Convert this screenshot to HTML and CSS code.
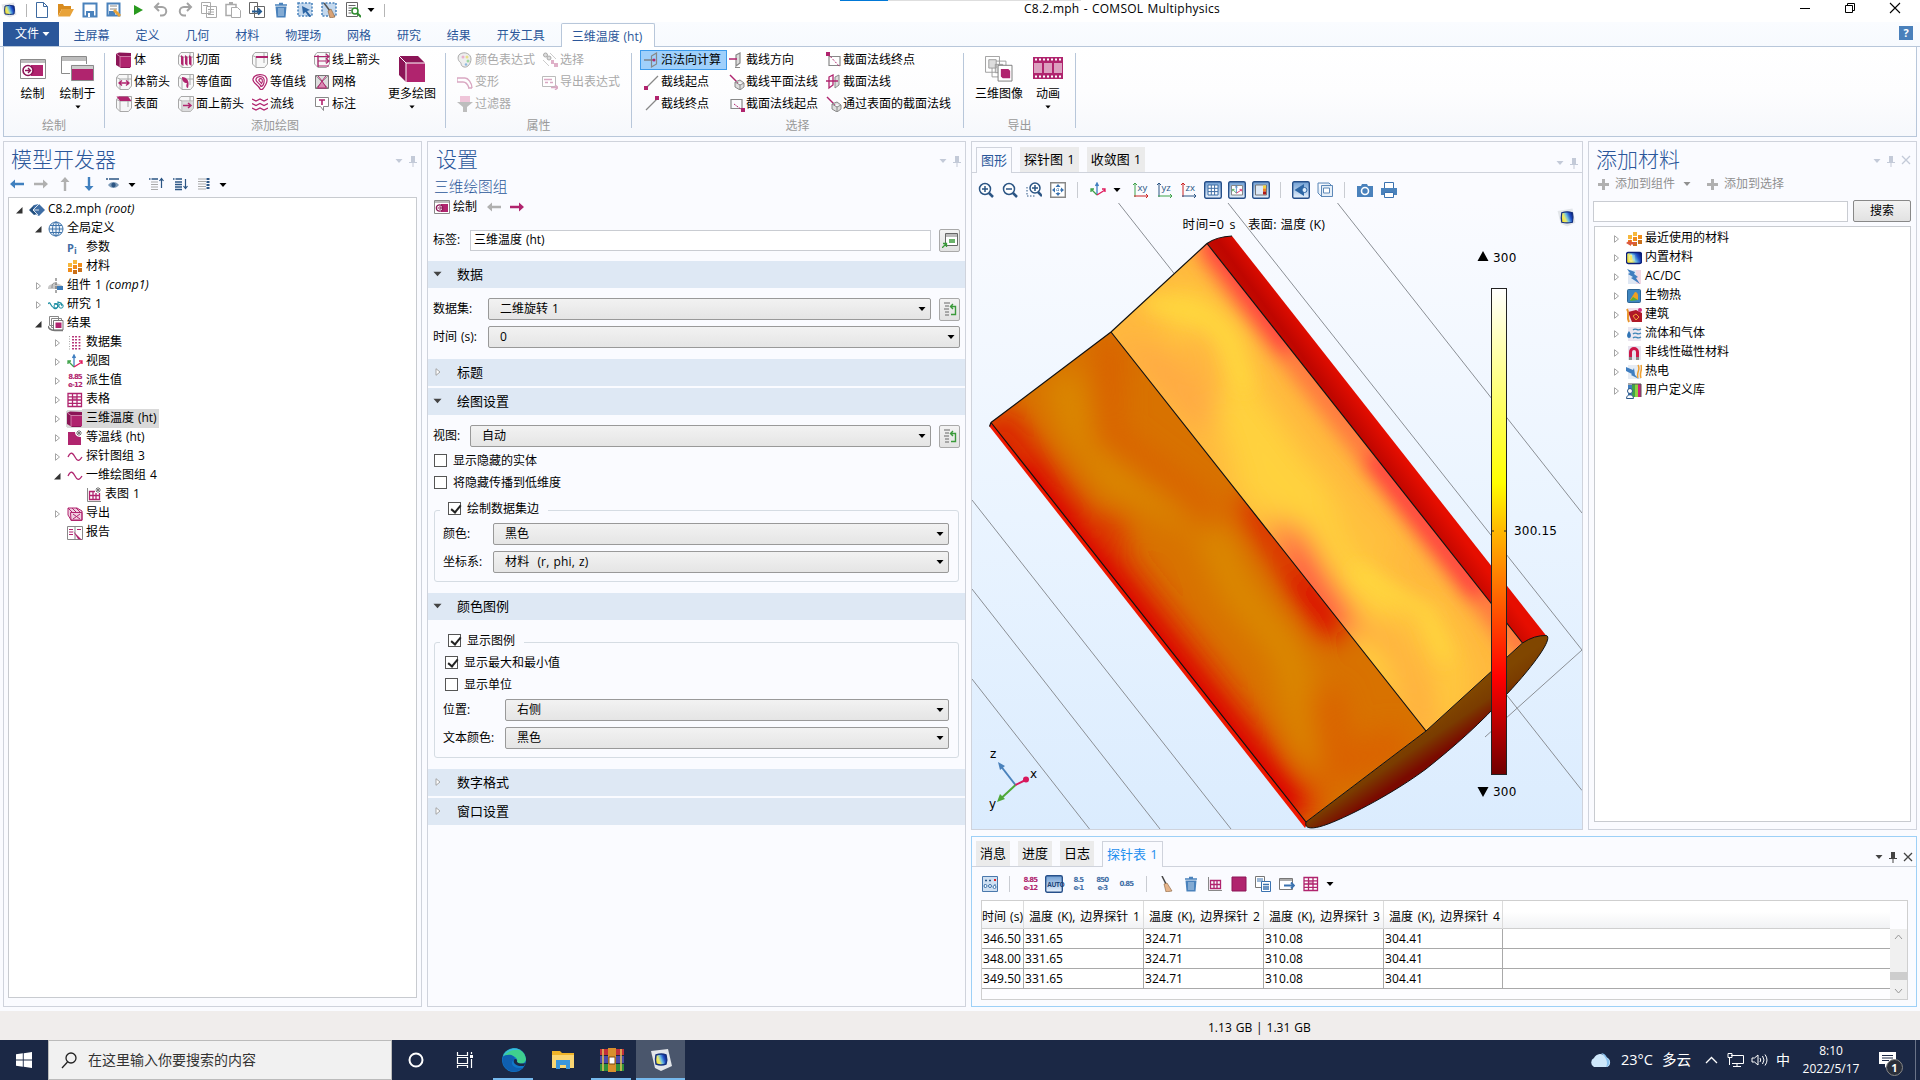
FILE: index.html
```html
<!DOCTYPE html>
<html lang="zh-CN">
<head>
<meta charset="utf-8">
<title>C8.2.mph - COMSOL Multiphysics</title>
<link rel="stylesheet" href="styles.css">
</head>
<body>
<svg class="defs" width="0" height="0">
<defs>
<linearGradient id="gBlue" x1="0" y1="0" x2="0" y2="1"><stop offset="0" stop-color="#6f9ed3"/><stop offset="1" stop-color="#eaf3fd"/></linearGradient>
<linearGradient id="gJet" x1="0" y1=".7" x2="1" y2=".3"><stop offset="0" stop-color="#f8e02c"/><stop offset=".3" stop-color="#e8e870"/><stop offset=".5" stop-color="#6fc0e0"/><stop offset=".75" stop-color="#2050c8"/><stop offset="1" stop-color="#0a1f7a"/></linearGradient>
</defs>
<symbol id="logo" viewBox="0 0 16 16"><path d="M.5 2.500L13 .5l2.500 12-7 3L3 13z" fill="#e3e6ea"/><path d="M4 4q4.500-1.500 9 0 1 4 0 8-4.500 1-9 0-.8-4 0-8z" fill="url(#gJet)" stroke="#14307e"/></symbol>
<symbol id="new" viewBox="0 0 16 16"><path d="M2.500 .5h7l4 4v11h-11zM9.500.5v4h4" fill="#fff" stroke="#3d6aa0"/></symbol>
<symbol id="open" viewBox="0 0 16 16"><path d="M0 14V2h5l1 2h7v3H4z" fill="#d98c1f"/><path d="M0 14.500L4 7h12l-4 7.500z" fill="#e8a33a"/></symbol>
<symbol id="save" viewBox="0 0 16 16"><path d="M1.500 1.500h13v13h-13z" fill="#fff" stroke="#4a82bc" stroke-width="2"/><path d="M4 9h8v6H4z" fill="#4a82bc"/><path d="M6 11h2v4H6z" fill="#fff"/></symbol>
<symbol id="saveas" viewBox="0 0 16 16"><path d="M1.500 1.500h12v12h-12z" fill="#fff" stroke="#4a82bc" stroke-width="2"/><path d="M4 4h7M4 7h7" stroke="#888"/><path d="M3 9h6v5H3z" fill="#4a82bc"/><path d="M8 8l6 6" stroke="#e8a33a" stroke-width="3"/></symbol>
<symbol id="play" viewBox="0 0 16 16"><path d="M4 3l9 5-9 5z" fill="#2a9a1f"/></symbol>
<symbol id="undo" viewBox="0 0 16 16"><path d="M2 5h7a4 4 0 0 1 0 8.500H7M6 1L2 5l4 4" fill="none" stroke="#a3a3a3" stroke-width="2"/></symbol>
<symbol id="redo" viewBox="0 0 16 16"><path d="M14 5H7a4 4 0 0 0 0 8.500h2M10 1l4 4-4 4" fill="none" stroke="#a3a3a3" stroke-width="2"/></symbol>
<symbol id="copy" viewBox="0 0 16 16"><path d="M.5.5h9v11h-9zM5.500 4.500h10v11h-10z" fill="#fff" stroke="#aaa"/><path d="M7 7.500h6M7 10h6M7 12.500h6M2 3.500h5" stroke="#aaa"/></symbol>
<symbol id="paste" viewBox="0 0 16 16"><path d="M1 2.500h10v11H1z" fill="#fff" stroke="#aaa" stroke-width="1.500"/><path d="M4 0h4v3H4z" fill="#aaa"/><path d="M6.500 5.500h6l3 3v7h-9z" fill="#fff" stroke="#aaa"/></symbol>
<symbol id="dup" viewBox="0 0 16 16"><path d="M.5.500h8v11h-8zM5.500 4.500h10v11h-10z" fill="#fff" stroke="#666"/><path d="M3 9.500h9M9 6.500l3 3-3 3" stroke="#245a90" stroke-width="2" fill="none"/></symbol>
<symbol id="trash" viewBox="0 0 16 16"><path d="M2.500 4.500h11l-1 11h-9z" fill="#4a82bc"/><path d="M6 6v8M8 6v8M10 6v8" stroke="#bcd3ea"/><path d="M2 3h12M6 1.500h4" stroke="#4a82bc" stroke-width="1.500"/></symbol>
<symbol id="sel" viewBox="0 0 16 16"><rect x="1" y="1" width="14" height="13" fill="#c3d8ee" stroke="#4a82bc" stroke-width="1.500" stroke-dasharray="2 1.500"/><path d="M5 4l8 4-3 1 4 5-2 1-3.500-5L6 12z" fill="#2d66a5"/></symbol>
<symbol id="selb" viewBox="0 0 16 16"><rect x="1" y="1" width="14" height="13" fill="#c3d8ee" stroke="#4a82bc" stroke-width="1.500" stroke-dasharray="2 1.500"/><path d="M3 1l6 8" stroke="#555" stroke-width="1.500"/><path d="M7 9l3-2 4 8-5 1z" fill="#d9a377" stroke="#84603c" stroke-width=".6"/></symbol>
<symbol id="find" viewBox="0 0 16 16"><path d="M1.500.500h11v14h-11z" fill="#fff" stroke="#666"/><path d="M3.500 3.500h7M3.500 6h4M3.500 8.500h3M3.500 11h3" stroke="#666"/><circle cx="10" cy="9" r="3" fill="#fff" stroke="#2e8b2e" stroke-width="1.500"/><path d="M12 11l4 4" stroke="#2e8b2e" stroke-width="2"/></symbol>
<symbol id="dd" viewBox="0 0 8 8"><path d="M.5 2h7L4 6z" fill="currentColor"/></symbol>
<symbol id="pin" viewBox="0 0 8 12"><path d="M2 1h4v6H2zM0 7h8v1H0zM3.500 8h1v4h-1z" fill="currentColor"/></symbol>
<symbol id="x" viewBox="0 0 10 10"><path d="M1 1l8 8M9 1L1 9" stroke="currentColor" stroke-width="1.300"/></symbol>
<symbol id="tc" viewBox="0 0 8 8"><path d="M2.500 .7v6.600L6.500 4z" fill="#fff" stroke="#a5a5a5"/></symbol>
<symbol id="to" viewBox="0 0 8 8"><path d="M7.500 1v6.500H1z" fill="#333"/></symbol>
<symbol id="so" viewBox="0 0 10 8"><path d="M.5 1.500h9L5 6.500z" fill="#444"/></symbol>
<!-- ribbon -->
<symbol id="plot" viewBox="0 0 26 20"><path d="M.5.500h25v19H.5z" fill="#fff" stroke="#8a8a8a"/><path d="M1 1h24v3H1z" fill="#bdbdbd"/><path d="M11 6h12v11H11z" fill="#b0246e"/><circle cx="8" cy="11.500" r="5" fill="#fff" stroke="#8c1557" stroke-width="1.600"/><path d="M5 11.500h5M8 9l2.500 2.500L8 14" fill="none" stroke="#8c1557" stroke-width="1.400"/></symbol>
<symbol id="plots" viewBox="0 0 16 14"><path d="M.5.500h15v13H.5z" fill="#fff" stroke="#8a8a8a"/><path d="M1 1h14v2H1z" fill="#bdbdbd"/><path d="M7 4h7v8H7z" fill="#b0246e"/><circle cx="5.500" cy="8" r="3.200" fill="#fff" stroke="#8c1557" stroke-width="1.200"/><path d="M3.500 8h4M5.500 6l2 2-2 2" fill="none" stroke="#8c1557"/></symbol>
<symbol id="plotin" viewBox="0 0 34 26"><path d="M.5.500h25v17H.5z" fill="#fff" stroke="#8a8a8a"/><path d="M1 1h24v4H1z" fill="#bdbdbd"/><path d="M9 8h25v18H9z" fill="#fafbfe"/><path d="M10.500 9.500h22v15h-22z" fill="#b0246e" stroke="#8a8a8a"/><path d="M11 10h21v3H11z" fill="#ccc"/></symbol>
<symbol id="cube" viewBox="0 0 16 16"><path d="M0 2l3-1.500 12 .5v13l-1 2H5L0 13z" fill="#8c1557"/><path d="M4 4.500h11V15H4z" fill="#b0246e"/><path d="M.5 2L4 4.500h11M4 4.500V15" stroke="#e3a3c4" fill="none" stroke-width=".7"/></symbol>
<symbol id="wc" viewBox="0 0 16 16"><path d="M.5 3.500L3 .5h12.500v11.500l-3 3.500H4L.5 12zM.5 3.500L4 5h11.500M4 5v10.500M12 1v10" fill="#f4f4f4" stroke="#a8a8a8" fill-opacity=".6"/></symbol>
<symbol id="varr" viewBox="0 0 16 16"><use href="#wc"/><path d="M3 9h10M10 6.500L13 9l-3 2.500M6 6.500L3 9l3 2.500" stroke="#b0246e" fill="none" stroke-width="1.300"/></symbol>
<symbol id="surf" viewBox="0 0 16 16"><use href="#wc"/><path d="M.5 .5h11.500L15.500 5H4z" fill="#b0246e"/></symbol>
<symbol id="slice" viewBox="0 0 16 16"><use href="#wc"/><path d="M3 3l2.500 2v9L3 12zM7 3l2.500 2v9L7 12zM11 3l2.500 2v9L11 12z" fill="#b0246e"/></symbol>
<symbol id="iso" viewBox="0 0 16 16"><use href="#wc"/><path d="M4 3c5 0 8 4 6 11-2 0-2-3-1-5-3 0-5-2-5-6z" fill="#b0246e"/></symbol>
<symbol id="sarr" viewBox="0 0 16 16"><use href="#wc"/><path d="M4 5h11.500v7l-3 3.500H4z" fill="#d2d2d2" fill-opacity=".7"/><path d="M5 9.500h8M10 7l3 2.500-3 2.500" stroke="#b0246e" fill="none" stroke-width="1.500"/></symbol>
<symbol id="line" viewBox="0 0 16 16"><use href="#wc"/><path d="M4 5h12" stroke="#b0246e" stroke-width="2"/></symbol>
<symbol id="cont" viewBox="0 0 16 16"><g fill="none" stroke="#b0246e" stroke-width="1.200"><path d="M8 15C7 11 0 9 1 5s6-5 10-4 5 5 3 9-4 7-6 5z"/><path d="M9 12.500C8 9 3 8 4 5s6-3 7.500-1 .5 8-2.500 8.500z"/><path d="M9.500 9.500C8.500 7.500 6 7 7 5.500s3-1 3.200 0 0 3.500-.7 4z"/></g></symbol>
<symbol id="stream" viewBox="0 0 16 16"><path d="M0 3l4 2 4-2 4 2 4-2M0 7.500l4 2 4-2 4 2 4-2M0 12l4 2 4-2 4 2 4-2" stroke="#b0246e" stroke-width="1.300" fill="none"/></symbol>
<symbol id="larr" viewBox="0 0 16 16"><use href="#wc"/><path d="M0 4.500h15M12 2l3 2.500-3 2.500M4 9h11M12 6.500L15 9l-3 2.500M4 14h11M4 3v12" stroke="#b0246e" fill="none" stroke-width="1.200"/></symbol>
<symbol id="mesh" viewBox="0 0 16 16"><path d="M1.500 1.500h13v13h-13z" fill="#ddd" stroke="#777"/><path d="M2 2l12 12M14 2L2 14" stroke="#999"/><path d="M8 7l4.500 7h-9z" fill="#d98ab2" stroke="#b0246e"/><path d="M4 2l4 5 4-5" fill="none" stroke="#b0246e"/></symbol>
<symbol id="note" viewBox="0 0 16 16"><path d="M1.500 1.500h13v9h-5v4L6.500 10.500h-5z" fill="#fff" stroke="#888"/><path d="M5 4h6M8 4v5" stroke="#b0246e" stroke-width="1.600"/></symbol>
<symbol id="bigcube" viewBox="0 0 26 26"><path d="M0 0h19l7 7v19H7L0 19z" fill="#8c1557"/><path d="M7 7h19v19H7z" fill="#b0246e"/><path d="M0 0l7 7h19M7 7v19" fill="none" stroke="#fff"/></symbol>
<symbol id="pal" viewBox="0 0 16 16"><path d="M3 2c5-3 11 0 11 5 0 4-3 9-7 8s-2-4-4-5-3-6 0-8z" fill="#eee" stroke="#aaa"/><circle cx="6" cy="5" r="1.500" fill="#e8b0ce"/><circle cx="10" cy="5" r="1.500" fill="#e8e08a"/><circle cx="11" cy="9" r="1.500" fill="#9fd6a0"/><circle cx="9" cy="12.500" r="1.300" fill="#8fb8e0"/></symbol>
<symbol id="deform" viewBox="0 0 16 16"><path d="M0 4h8c3 0 7 5 7 10M0 8h6c3 0 5 3 6 6M0 4v4M11 14h4" stroke="#d9a8c2" stroke-width="1.400" fill="none"/></symbol>
<symbol id="filt" viewBox="0 0 16 16"><path d="M3 0h10v6H3z" fill="#efc5d9"/><path d="M0 6h16l-6 5v5H6v-5z" fill="#bdbdbd"/></symbol>
<symbol id="cho" viewBox="0 0 16 16"><g fill="#ddd" stroke="#aaa"><circle cx="3.500" cy="3" r="2"/><circle cx="7" cy="6" r="2"/></g><path d="M9 8h3v4H9zM12 11h4v4h-4z" fill="#dfb0c8"/><path d="M8 1l6 6M1 8l6 6" stroke="#ccc"/></symbol>
<symbol id="expx" viewBox="0 0 16 16"><path d="M.5 2.500h13v10H.5z" fill="#fff" stroke="#bbb"/><path d="M2 5.500h8M3 8.500h3M8 8.500h3M9 13.500h7M13 11l3 2.500-3 2.500" stroke="#d9a8c2" fill="none" stroke-width="1.400"/></symbol>
<symbol id="s1" viewBox="0 0 16 16"><path d="M7.500 4l5-3v11l-5 3z" fill="none" stroke="#888" stroke-width="1.200"/><path d="M0 8h9" stroke="#777" stroke-width="1.300"/><circle cx="10" cy="8" r="1.500" fill="#b0246e"/></symbol>
<symbol id="s2" viewBox="0 0 16 16"><path d="M2 14L14 2" stroke="#888" stroke-width="1.200"/><path d="M0 12h4v4H0z" fill="#b0246e"/></symbol>
<symbol id="s3" viewBox="0 0 16 16"><path d="M2 14L14 2" stroke="#888" stroke-width="1.200"/><path d="M11 0h4v4h-4z" fill="#b0246e"/></symbol>
<symbol id="s4" viewBox="0 0 16 16"><path d="M7 3l4-2v10l-4 3zM6 15.500h5" fill="#ddd" stroke="#888" stroke-width="1.200"/><path d="M0 7h8" stroke="#b0246e" stroke-width="1.500"/></symbol>
<symbol id="s5" viewBox="0 0 16 16"><path d="M1 1l8 8" stroke="#b0246e" stroke-width="1.500"/><path d="M6 8l5-2 4 3v4l-4 3-5-3zM6 8l5 3 4-2M11 11v5" fill="#ddd" stroke="#888"/></symbol>
<symbol id="s6" viewBox="0 0 16 16"><path d="M2 3.500h11v9H2z" fill="none" stroke="#888" stroke-width="1.200"/><path d="M5 8l8 6" stroke="#b0246e" stroke-dasharray="2 1"/><path d="M12 12h4v4h-4z" fill="#b0246e"/></symbol>
<symbol id="s7" viewBox="0 0 16 16"><path d="M3 4.500h11v9H3z" fill="none" stroke="#888" stroke-width="1.200"/><path d="M2 2l12 13" stroke="#b0246e" stroke-dasharray="2 1.500"/><path d="M0 0h4v4H0z" fill="#b0246e"/></symbol>
<symbol id="s8" viewBox="0 0 16 16"><path d="M9 3l4-2v10l-4 3z" fill="#ddd" stroke="#888"/><path d="M3 3l4-2v10l-4 3zM0 7h12" fill="none" stroke="#b0246e" stroke-width="1.300"/></symbol>
<symbol id="img3" viewBox="0 0 30 28"><g fill="#fff" stroke="#9a9a9a"><path d="M.5.500h15v17H.5zM7.500 5.500h15v17h-15z"/><path d="M4 4h8v9H4zM11 9h8v9h-8z" fill="#ddd"/></g><path d="M14 10h15v17H14z" fill="#fff" stroke="#777"/><path d="M17 14h8l2 2v8h-8l-2-2z" fill="#b0246e"/></symbol>
<symbol id="film" viewBox="0 0 30 22"><path d="M0 0h30v22H0z" fill="#b0246e"/><path d="M1 6h8v10H1zM11 6h8v10h-8zM21 6h8v10h-8z" fill="#dca0c0"/><path d="M2 2.500h27M2 19.500h27" stroke="#fff" stroke-width="2" stroke-dasharray="2 2"/></symbol>
<!-- toolbars -->
<symbol id="al" viewBox="0 0 16 16"><path d="M1 8l5-4.500v3.300h9v2.400H6v3.300z" fill="currentColor"/></symbol>
<symbol id="ar" viewBox="0 0 16 16"><path d="M15 8l-5-4.500v3.300H1v2.400h9v3.300z" fill="currentColor"/></symbol>
<symbol id="au" viewBox="0 0 16 16"><path d="M8 1L3.500 6h3.300v9h2.400V6h3.300z" fill="currentColor"/></symbol>
<symbol id="ad" viewBox="0 0 16 16"><path d="M8 15l-4.500-5h3.300V1h2.400v9h3.300z" fill="currentColor"/></symbol>
<symbol id="eye" viewBox="0 0 16 16"><path d="M1 3h2M4 3h10" stroke="#2b5584" stroke-width="1.500"/><path d="M3 9c3-4 8-4 11 0-3 4-8 4-11 0z" fill="#7c9ab8"/><circle cx="8.500" cy="9" r="2.200" fill="#2b5584"/></symbol>
<symbol id="ls" viewBox="0 0 16 16"><path d="M1 3h1.500M3.500 3H10" stroke="#2b5584" stroke-width="1.500"/><path d="M3 6h7M3 8.500h7M3 11h7M3 13.500h7" stroke="#aaa"/><path d="M13.500 12V3M11.500 5l2-2.500 2 2.500" fill="none" stroke="#2b5584" stroke-width="1.200"/></symbol>
<symbol id="ls2" viewBox="0 0 16 16"><path d="M1 3h1.500M3.500 3H10M3 6h7M3 8.500h7M3 11h7M3 13.500h7" stroke="#2b5584" stroke-width="1.300"/><path d="M13.500 3v9M11.500 10l2 2.500 2-2.500" fill="none" stroke="#2b5584" stroke-width="1.200"/></symbol>
<symbol id="ls3" viewBox="0 0 16 16"><path d="M2 3h8M2 5.500h8M2 8h8M2 10.500h8M2 13h8" stroke="#aaa"/><path d="M12 2v12" stroke="#2b5584" stroke-width="3" stroke-dasharray="2 1"/></symbol>
<symbol id="root" viewBox="0 0 16 16"><path d="M0 8l5-5 3 2-4 3 4 4-3 1z" fill="#24507f"/><path d="M5 3l5-1 6 6-6 6-2-1-4-5z" fill="#3f6ea5"/><path d="M10 2L4 8l5 5M4 8h6" stroke="#fff" fill="none" stroke-width=".8"/></symbol>
<symbol id="globe" viewBox="0 0 16 16"><g fill="none" stroke="#3f74ab"><circle cx="8" cy="8" r="7" fill="#eef5fc"/><ellipse cx="8" cy="8" rx="3.500" ry="7"/><path d="M8 1v14M1 8h14M2 4.500h12M2 11.500h12"/></g></symbol>
<symbol id="mat" viewBox="0 0 16 16"><path d="M1 4h4v4H1zM6 1h4v4H6z" fill="#f6b73c"/><path d="M1 9h4v4H1zM6 6h4v4H6zM11 4h4v4h-4z" fill="#f08c1a"/><path d="M6 11h4v4H6zM11 9h4v4h-4z" fill="#c9701a"/></symbol>
<symbol id="comp" viewBox="0 0 16 16"><path d="M0 10c0-6 15-6 15 0v1H0z" fill="#c8c8c8"/><path d="M4 10c0-4 1-5 3-5" fill="none" stroke="#888"/><path d="M9 8h6v4H9z" fill="#3a7ab8"/><path d="M8 0v16" stroke="#555" stroke-dasharray="3 1"/></symbol>
<symbol id="study" viewBox="0 0 16 16"><path d="M0 7c2-4 3 3 5 3M5 10a2.500 2.500 0 1 0 1-3M10 10V5l3 1 1 3" fill="none" stroke="#1d8fa3" stroke-width="1.200"/><circle cx="8" cy="9" r="2" fill="none" stroke="#1d8fa3"/><circle cx="13" cy="9" r="2.200" fill="none" stroke="#1d8fa3"/></symbol>
<symbol id="res" viewBox="0 0 16 16"><path d="M1.500.500h9v9h-9zM3.500 2.500h10v9h-10z" fill="#fff" stroke="#888"/><path d="M5.500 4.500h9.500v9.500h-9.500z" fill="#fff" stroke="#777"/><path d="M7.500 6.500h6v5.500h-6z" fill="#b0246e"/><path d="M0 10c1 5 6 4.500 15 4.500" fill="none" stroke="#777" stroke-width="1.400"/></symbol>
<symbol id="ds" viewBox="0 0 16 16"><path d="M2.500 1v14" stroke="#aaa" stroke-dasharray="1 1.500"/><path d="M6 1v14M9 1v14M12.500 1v14" stroke="#b0246e" stroke-width="1.800" stroke-dasharray="1.500 1.500"/></symbol>
<symbol id="axes" viewBox="0 0 16 16"><path d="M7 13V2M5.500 4L7 1l1.500 3" stroke="#3f7ec0" fill="none" stroke-width="1.300"/><path d="M7 13L1 7M1 10V7h3" stroke="#3fa34a" fill="none" stroke-width="1.300"/><path d="M7 13l8-5M12 7h3v3" stroke="#e0195c" fill="none" stroke-width="1.300"/></symbol>
<symbol id="tbl" viewBox="0 0 16 16"><path d="M1 1.500h13.500v13H1z" fill="#fff"/><path d="M5 5h5v3H5z" fill="#dca0c0"/><path d="M1 1.500h13.500v13H1zM1 4.800h13.500M1 8h13.500M1 11.300h13.500M5.500 1.500v13M10 1.500v13" fill="none" stroke="#b0246e" stroke-width="1.300"/></symbol>
<symbol id="isot" viewBox="0 0 16 16"><path d="M1 2h7c0 4 3 5 6 5v8H1z" fill="#b0246e"/><path d="M12 0v6M9 3h6M10 1l4 4M14 1l-4 4" stroke="#777"/></symbol>
<symbol id="wave" viewBox="0 0 16 16"><path d="M1 8c3-6 5-4 7 0s4 5 7 0" fill="none" stroke="#b0246e" stroke-width="1.300"/></symbol>
<symbol id="tg" viewBox="0 0 16 16"><path d="M1.500 1v13.500H15" fill="none" stroke="#888"/><path d="M3.500 4.500h10v8h-10zM3.500 8.500h10M7 4.500v8M10 4.500v8" fill="none" stroke="#b0246e" stroke-width="1.300"/></symbol>
<symbol id="tgs" viewBox="0 0 16 16"><use href="#tg"/><path d="M9 0h7v6H9z" fill="#fff"/><path d="M12 0v6M9.500 3h5.500M10 1l4 4M14 1l-4 4" stroke="#777"/></symbol>
<symbol id="exp" viewBox="0 0 16 16"><path d="M1 2h9l5 3v9H4L1 9z" fill="#f0cfe0" stroke="#b0246e"/><path d="M3.500 6.500H15v8H4zM6 8l7 5M13 8l-7 5M1 2l4 4M5 2l4 4M9 2l4 4" stroke="#b0246e" fill="none"/></symbol>
<symbol id="rep" viewBox="0 0 16 16"><path d="M.5 1.500h15v13H.5zM8 1.500v13" fill="#fff" stroke="#888"/><path d="M2 4.500h4M2 7h4M2 9.500h4M10 4.500h4" stroke="#b0246e"/><path d="M6 6l9 9-4-1z" fill="#b0246e"/></symbol>
<symbol id="goto" viewBox="0 0 16 16"><path d="M3.500 1.500h12v12h-12z" fill="#fff" stroke="#666"/><path d="M4 2h11v3H4z" fill="#bbb"/><path d="M7 8h6M7 10h6M0 16l4-4M1 11.500h3.500V15" stroke="#3a9a3a" stroke-width="1.300" fill="none"/></symbol>
<symbol id="lst" viewBox="0 0 16 16"><path d="M2 2h6M3 5h4M2 8h5M3 11h4M3 14h4" stroke="#666"/><path d="M9 13.500h4.500v-8H9M11 3L8.500 5.500 11 8" stroke="#3a9a3a" fill="none" stroke-width="1.400"/></symbol>
<!-- graphics toolbar -->
<symbol id="zi" viewBox="0 0 16 16"><circle cx="7" cy="7" r="5.500" fill="#fff" stroke="#2b5584" stroke-width="1.500"/><path d="M11 11l4 4" stroke="#2b5584" stroke-width="2.500"/><path d="M4 7h6M7 4v6" stroke="#2b5584" stroke-width="1.500"/></symbol>
<symbol id="zo" viewBox="0 0 16 16"><circle cx="7" cy="7" r="5.500" fill="#fff" stroke="#2b5584" stroke-width="1.500"/><path d="M11 11l4 4" stroke="#2b5584" stroke-width="2.500"/><path d="M4 7h6" stroke="#2b5584" stroke-width="1.500"/></symbol>
<symbol id="zb" viewBox="0 0 16 16"><path d="M1 5v9h9" fill="none" stroke="#2b5584" stroke-dasharray="1.500 1.500"/><circle cx="9" cy="6" r="5" fill="#fff" stroke="#2b5584" stroke-width="1.500"/><path d="M12 10l4 4" stroke="#2b5584" stroke-width="2.500"/><path d="M6 6h6M9 3v6" stroke="#2b5584" stroke-width="1.500"/></symbol>
<symbol id="ze" viewBox="0 0 16 16"><path d="M.7.700h14.600v14.600H.7z" fill="#fff" stroke="#888" stroke-width="1.400"/><path d="M8 2l2.500 3h-5zM8 14l2.500-3h-5zM2 8l3-2.500v5zM14 8l-3-2.500v5z" fill="#3a72b0"/><path d="M8 4v8M4 8h8" stroke="#3a72b0" stroke-dasharray="1 1"/></symbol>
<symbol id="on" viewBox="0 0 18 18"><rect x=".7" y=".7" width="16.600" height="16.600" rx="1.500" fill="url(#gBlue)" stroke="#27508a" stroke-width="1.400"/></symbol>
<symbol id="grid" viewBox="0 0 18 18"><use href="#on"/><path d="M4 4h10v10H4zM4 7.300h10M4 10.600h10M7.300 4v10M10.600 4v10" fill="#fff" stroke="#3f6ea5"/></symbol>
<symbol id="gax" viewBox="0 0 18 18"><use href="#on"/><path d="M3.500 4.500h11v9.500h-11z" fill="#fff" stroke="#888"/><use href="#axes" x="4" y="4" width="10" height="10"/></symbol>
<symbol id="gleg" viewBox="0 0 18 18"><use href="#on"/><path d="M3.500 4h11v10h-11z" fill="#dfeaf6" stroke="#777"/><path d="M11 4.500h3v3h-3z" fill="#f7d53a"/><path d="M11 7.500h3v3h-3z" fill="#f08020"/><path d="M11 10.500h3v3h-3z" fill="#b01818"/></symbol>
<symbol id="spk" viewBox="0 0 18 18"><use href="#on"/><path d="M2.500 9L12 3v12z" fill="#2d66a5"/><circle cx="12.500" cy="9" r="2.500" fill="#dcebfa" stroke="#2d66a5"/></symbol>
<symbol id="trn" viewBox="0 0 16 16"><path d="M4.500 3.500h11v11h-11zM1 1h11l3 3M1 1v10l4 4" fill="#e6eff8" stroke="#5d88b8"/><path d="M6.500 6h6v5h-6z" fill="#fff" stroke="#5d88b8"/></symbol>
<symbol id="cam" viewBox="0 0 16 16"><path d="M0 4h4l1-2h5l1 2h5v11H0z" fill="#4a82bc"/><circle cx="8" cy="9" r="3.500" fill="none" stroke="#fff" stroke-width="1.600"/></symbol>
<symbol id="prn" viewBox="0 0 16 16"><path d="M3.500.500h9v6h-9z" fill="#fff" stroke="#3a72b0"/><path d="M0 6h16v7H0z" fill="#4a82bc"/><path d="M3.500 10.500h9v5h-9z" fill="#fff" stroke="#3a72b0"/></symbol>
<!-- table toolbar -->
<symbol id="abc" viewBox="0 0 16 16"><path d="M.5.500h15v15H.5z" fill="#cfe0f2" stroke="#4a78ac"/><path d="M3 4.500h8" stroke="#2b5584" stroke-width="1.600" stroke-dasharray="2 2"/><path d="M12 3h2v2h-2z" fill="#e02020"/><path d="M3 8v4M8 8v4M13 8v4" stroke="#3f74ab"/><g fill="#fff" stroke="#3f74ab"><circle cx="3.500" cy="10" r="1.500"/><circle cx="8" cy="10" r="1.500"/><circle cx="12.500" cy="11" r="1.500"/></g></symbol>
<symbol id="broom" viewBox="0 0 16 16"><path d="M3 0l4 8" stroke="#444" stroke-width="1.500"/><path d="M5 8l3-1 5 8-6 1z" fill="#e6b48a" stroke="#84603c" stroke-width=".6"/></symbol>
<symbol id="sq" viewBox="0 0 16 16"><path d="M1 1h14v14H1z" fill="#b0246e" stroke="#8c1557"/></symbol>
<symbol id="cpy" viewBox="0 0 16 16"><path d="M.5.500h9v11h-9z" fill="#fff" stroke="#777"/><path d="M2 3h6M2 5h6" stroke="#3a72b0"/><path d="M6.500 5.500h9v10h-9z" fill="#fff" stroke="#3a72b0"/><path d="M8 8.500h6M8 11h6M8 13h6" stroke="#3a72b0" stroke-width="1.500"/></symbol>
<symbol id="ext" viewBox="0 0 16 16"><path d="M.5 2.500h13v11H.5z" fill="#fff" stroke="#777"/><path d="M1 3h12v2H1z" fill="#aaa"/><path d="M5 9.500h10M12 6.500l3 3-3 3" stroke="#3a72b0" fill="none" stroke-width="1.800"/></symbol>
<!-- material library -->
<symbol id="m1" viewBox="0 0 16 16"><use href="#mat" x="1"/><path d="M0 12l5-3.500V11h5v2.500H5V15z" fill="#dd5a3c"/></symbol>
<symbol id="m2" viewBox="0 0 16 16"><rect x=".5" y="2.500" width="15" height="11" rx="2" fill="url(#gJet)" stroke="#0a1f7a" stroke-width="1.400"/><path d="M4 5h2v6H4zM8 5v6" fill="#f8e02c" stroke="#fff" stroke-width=".5"/></symbol>
<symbol id="m3" viewBox="0 0 16 16"><path d="M2 1h13v14H2z" fill="#dfe7f3"/><path d="M10 1h5v14h-5z" fill="#f0d8e4"/><path d="M1 0l8 3-1 2 4 3-2 1 4 6-9-6 2-1-5-3 2-1z" fill="#3f7ec0"/></symbol>
<symbol id="m4" viewBox="0 0 16 16"><rect x="1.500" y="1.500" width="13" height="13" rx="1" fill="#3f86c0" stroke="#2c6494"/><path d="M4 12l5-8c4 0 3 6 3 8z" fill="#f0a020"/><path d="M4 13l3-4 5 3z" fill="#5ab030"/></symbol>
<symbol id="m5" viewBox="0 0 16 16"><path d="M2 1h13v14H2z" fill="#f3e0ea"/><path d="M2 5l8-2 6 3v9H6z" fill="#b01828"/><path d="M1 2c3 4-1 8 2 13" stroke="#e8952a" stroke-width="2" fill="none"/><path d="M7 9l3-2 3 3-3 3z" fill="none" stroke="#f6a03a"/><circle cx="14" cy="3" r="2" fill="#d0307a"/></symbol>
<symbol id="m6" viewBox="0 0 16 16"><path d="M2 1h13v14H2z" fill="#eae6f0"/><path d="M3 5c3 4 2 7 0 7s-3-3 0-7z" fill="#2f74b5"/><path d="M7 4c3-3 4 2 8-1M7 8c3-3 4 2 8-1M7 12c3-3 4 2 8-1" stroke="#3f86b8" stroke-width="1.300" fill="none"/></symbol>
<symbol id="m7" viewBox="0 0 16 16"><path d="M2 1h13v14H2z" fill="#e6e2ee"/><path d="M4.500 14V7a3.500 3.500 0 0 1 7 0v7" stroke="#cc1648" stroke-width="3" fill="none"/><path d="M3 12h3v3H3zM10 12h3v3h-3z" fill="#888"/></symbol>
<symbol id="m8" viewBox="0 0 16 16"><path d="M2 1h13v14H2z" fill="#e6ecf4"/><path d="M0 3l7 3 1-2 1 7 4 4-8-4 1-1-6-3z" fill="#3f7ec0"/><path d="M12 1c3 5-2 7 0 13M15 1c2 5-2 7 0 13" stroke="#f0a030" fill="none" stroke-width="1.500"/></symbol>
<symbol id="m9" viewBox="0 0 16 16"><path d="M2 2h4v12H2z" fill="#3f7ec0"/><path d="M6 1h3v13H6z" fill="#3fa34a"/><path d="M9 1h3v13H9z" fill="#8fd040"/><path d="M12 1h3v13h-3z" fill="#d0207a"/><path d="M2 1h13v13" fill="none" stroke="#555"/><circle cx="4" cy="8" r="2.500" fill="#fff" stroke="#2b5584"/><path d="M.5 15.500c0-5 7-5 7 0z" fill="#fff" stroke="#2b5584"/></symbol>
</svg>

<header class="titlebar">
  <svg class="i"><use href="#logo"/></svg><i class="vsep"></i>
  <div class="quick">
    <svg class="i"><use href="#new"/></svg><svg class="i"><use href="#open"/></svg><svg class="i"><use href="#save"/></svg><svg class="i"><use href="#saveas"/></svg><svg class="i"><use href="#play"/></svg><svg class="i"><use href="#undo"/></svg><svg class="i"><use href="#redo"/></svg><svg class="i"><use href="#copy"/></svg><svg class="i"><use href="#paste"/></svg><svg class="i"><use href="#dup"/></svg><svg class="i"><use href="#trash"/></svg><svg class="i"><use href="#sel"/></svg><svg class="i"><use href="#selb"/></svg><svg class="i"><use href="#find"/></svg>
  </div>
  <svg class="dd qd"><use href="#dd"/></svg><i class="vsep"></i>
  <div class="loading"><i></i></div>
  <div class="wtitle">C8.2.mph - COMSOL Multiphysics</div>
  <div class="winbtns">
    <svg width="12" height="12"><path d="M1 6.500h10" stroke="#000"/></svg>
    <svg width="12" height="12"><path d="M1.500 3.500h7v7h-7zM3.500 3.500v-2h7v7h-2" fill="none" stroke="#000"/></svg>
    <svg width="12" height="12"><path d="M1 1l10 10M11 1L1 11" stroke="#000" stroke-width="1.100"/></svg>
  </div>
</header>

<nav class="tabs">
  <a class="file">文件<svg class="dd"><use href="#dd"/></svg></a>
  <a>主屏幕</a><a>定义</a><a>几何</a><a>材料</a><a>物理场</a><a>网格</a><a>研究</a><a>结果</a><a>开发工具</a><a class="cur">三维温度 (ht)</a>
  <b class="help">?</b>
</nav>

<section class="ribbon">
  <div class="grp g1">
    <div class="bigs">
      <div class="big"><svg width="26" height="26" viewBox="0 -3 26 26"><use href="#plot" width="26" height="20"/></svg><span>绘制</span></div>
      <div class="big"><svg width="34" height="26"><use href="#plotin"/></svg><span>绘制于</span><svg class="dd"><use href="#dd"/></svg></div>
    </div>
    <h6>绘制</h6>
  </div>
  <div class="grp g2">
    <div class="row">
    <div class="cmds c2">
      <p><svg class="i"><use href="#cube"/></svg>体</p><p><svg class="i"><use href="#slice"/></svg>切面</p><p><svg class="i"><use href="#line"/></svg>线</p><p><svg class="i"><use href="#larr"/></svg>线上箭头</p>
      <p><svg class="i"><use href="#varr"/></svg>体箭头</p><p><svg class="i"><use href="#iso"/></svg>等值面</p><p><svg class="i"><use href="#cont"/></svg>等值线</p><p><svg class="i"><use href="#mesh"/></svg>网格</p>
      <p><svg class="i"><use href="#surf"/></svg>表面</p><p><svg class="i"><use href="#sarr"/></svg>面上箭头</p><p><svg class="i"><use href="#stream"/></svg>流线</p><p><svg class="i"><use href="#note"/></svg>标注</p>
    </div>
    <div class="big more"><svg width="26" height="26"><use href="#bigcube"/></svg><span>更多绘图</span><svg class="dd"><use href="#dd"/></svg></div>
    </div>
    <h6>添加绘图</h6>
  </div>
  <div class="grp g3 off">
    <div class="cmds c3">
      <p><svg class="i"><use href="#pal"/></svg>颜色表达式</p><p><svg class="i"><use href="#cho"/></svg>选择</p>
      <p><svg class="i"><use href="#deform"/></svg>变形</p><p><svg class="i"><use href="#expx"/></svg>导出表达式</p>
      <p><svg class="i"><use href="#filt"/></svg>过滤器</p>
    </div>
    <h6>属性</h6>
  </div>
  <div class="grp g4">
    <div class="cmds c4">
      <p class="hot"><svg class="i"><use href="#s1"/></svg>沿法向计算</p><p><svg class="i"><use href="#s4"/></svg>截线方向</p><p><svg class="i"><use href="#s7"/></svg>截面法线终点</p>
      <p><svg class="i"><use href="#s2"/></svg>截线起点</p><p><svg class="i"><use href="#s5"/></svg>截线平面法线</p><p><svg class="i"><use href="#s8"/></svg>截面法线</p>
      <p><svg class="i"><use href="#s3"/></svg>截线终点</p><p><svg class="i"><use href="#s6"/></svg>截面法线起点</p><p><svg class="i"><use href="#s5"/></svg>通过表面的截面法线</p>
    </div>
    <h6>选择</h6>
  </div>
  <div class="grp g5">
    <div class="bigs">
      <div class="big"><svg width="30" height="26"><use href="#img3"/></svg><span>三维图像</span></div>
      <div class="big"><svg width="30" height="26"><use href="#film" y="1" width="30" height="22"/></svg><span>动画</span><svg class="dd"><use href="#dd"/></svg></div>
    </div>
    <h6>导出</h6>
  </div>
</section>

<main class="work">
  <section class="panel builder">
    <div class="phead"><h2>模型开发器</h2><svg class="dd"><use href="#dd"/></svg><svg class="pin"><use href="#pin"/></svg></div>
    <div class="btools">
      <svg class="i blue"><use href="#al"/></svg><svg class="i gray"><use href="#ar"/></svg><svg class="i gray"><use href="#au"/></svg><svg class="i blue"><use href="#ad"/></svg><svg class="i"><use href="#eye"/></svg><svg class="dd"><use href="#dd"/></svg><svg class="i"><use href="#ls"/></svg><svg class="i"><use href="#ls2"/></svg><svg class="i"><use href="#ls3"/></svg><svg class="dd"><use href="#dd"/></svg>
    </div>
    <ul class="tree">
      <li><svg class="t"><use href="#to"/></svg><svg class="i"><use href="#root"/></svg><span>C8.2.mph <em>(root)</em></span></li>
      <li class="l1"><svg class="t"><use href="#to"/></svg><svg class="i"><use href="#globe"/></svg><span>全局定义</span></li>
      <li class="l2"><svg class="t"></svg><svg class="i" viewBox="0 0 16 16"><text class="pi" x="0" y="12">P<tspan dy="2" font-size="9">i</tspan></text></svg><span>参数</span></li>
      <li class="l2"><svg class="t"></svg><svg class="i"><use href="#mat"/></svg><span>材料</span></li>
      <li class="l1"><svg class="t"><use href="#tc"/></svg><svg class="i"><use href="#comp"/></svg><span>组件 1 <em>(comp1)</em></span></li>
      <li class="l1"><svg class="t"><use href="#tc"/></svg><svg class="i"><use href="#study"/></svg><span>研究 1</span></li>
      <li class="l1"><svg class="t"><use href="#to"/></svg><svg class="i"><use href="#res"/></svg><span>结果</span></li>
      <li class="l2"><svg class="t"><use href="#tc"/></svg><svg class="i"><use href="#ds"/></svg><span>数据集</span></li>
      <li class="l2"><svg class="t"><use href="#tc"/></svg><svg class="i"><use href="#axes"/></svg><span>视图</span></li>
      <li class="l2"><svg class="t"><use href="#tc"/></svg><div class="num mag">8.85<br>e-12</div><span>派生值</span></li>
      <li class="l2"><svg class="t"><use href="#tc"/></svg><svg class="i"><use href="#tbl"/></svg><span>表格</span></li>
      <li class="l2 picked"><svg class="t"><use href="#tc"/></svg><svg class="i"><use href="#cube"/></svg><span>三维温度 (ht)</span></li>
      <li class="l2"><svg class="t"><use href="#tc"/></svg><svg class="i"><use href="#isot"/></svg><span>等温线 (ht)</span></li>
      <li class="l2"><svg class="t"><use href="#tc"/></svg><svg class="i"><use href="#wave"/></svg><span>探针图组 3</span></li>
      <li class="l2"><svg class="t"><use href="#to"/></svg><svg class="i"><use href="#wave"/></svg><span>一维绘图组 4</span></li>
      <li class="l3"><svg class="t"></svg><svg class="i"><use href="#tgs"/></svg><span>表图 1</span></li>
      <li class="l2"><svg class="t"><use href="#tc"/></svg><svg class="i"><use href="#exp"/></svg><span>导出</span></li>
      <li class="l2"><svg class="t"></svg><svg class="i"><use href="#rep"/></svg><span>报告</span></li>
    </ul>
  </section>

  <section class="panel settings">
    <div class="phead"><h2>设置</h2><svg class="dd"><use href="#dd"/></svg><svg class="pin"><use href="#pin"/></svg></div>
    <h3>三维绘图组</h3>
    <div class="stools"><svg class="i"><use href="#plots"/></svg><span>绘制</span><svg class="i gray"><use href="#al"/></svg><svg class="i mag"><use href="#ar"/></svg></div>
    <div class="frm lab"><label>标签:</label><div class="inp">三维温度 (ht)</div><div class="btn"><svg class="i"><use href="#goto"/></svg></div></div>
    <h4><svg><use href="#so"/></svg>数据</h4>
    <div class="body b1">
      <div class="frm w55"><label>数据集:</label><div class="cmb">二维旋转 1<svg class="dd"><use href="#dd"/></svg></div><div class="btn"><svg class="i"><use href="#lst"/></svg></div></div>
      <div class="frm w55"><label>时间 (s):</label><div class="cmb">0<svg class="dd"><use href="#dd"/></svg></div></div>
    </div>
    <h4><svg><use href="#tc"/></svg>标题</h4>
    <h4 class="next"><svg><use href="#so"/></svg>绘图设置</h4>
    <div class="body b2">
      <div class="frm"><label>视图:</label><div class="cmb">自动<svg class="dd"><use href="#dd"/></svg></div><div class="btn"><svg class="i"><use href="#lst"/></svg></div></div>
      <div class="chk"><i></i>显示隐藏的实体</div>
      <div class="chk"><i></i>将隐藏传播到低维度</div>
      <div class="box">
        <div class="chk leg"><i class="on"></i>绘制数据集边</div>
        <div class="frm w50"><label>颜色:</label><div class="cmb">黑色<svg class="dd"><use href="#dd"/></svg></div></div>
        <div class="frm w50"><label>坐标系:</label><div class="cmb"><span class="pre">材料  (r, phi, z)</span><svg class="dd"><use href="#dd"/></svg></div></div>
      </div>
    </div>
    <h4><svg><use href="#so"/></svg>颜色图例</h4>
    <div class="body b3">
      <div class="box">
        <div class="chk leg"><i class="on"></i>显示图例</div>
        <div class="chk"><i class="on"></i>显示最大和最小值</div>
        <div class="chk"><i></i>显示单位</div>
        <div class="frm w62"><label>位置:</label><div class="cmb">右侧<svg class="dd"><use href="#dd"/></svg></div></div>
        <div class="frm w62"><label>文本颜色:</label><div class="cmb">黑色<svg class="dd"><use href="#dd"/></svg></div></div>
      </div>
    </div>
    <h4><svg><use href="#tc"/></svg>数字格式</h4>
    <h4 class="next"><svg><use href="#tc"/></svg>窗口设置</h4>
  </section>

  <div class="right">
    <div class="upper">
      <section class="panel graphics">
        <div class="ptabs"><a class="cur">图形</a><a>探针图 1</a><a>收敛图 1</a><span class="sp"></span><svg class="dd"><use href="#dd"/></svg><svg class="pin"><use href="#pin"/></svg></div>
        <div class="gtools">
          <svg class="i"><use href="#zi"/></svg><svg class="i"><use href="#zo"/></svg><svg class="i"><use href="#zb"/></svg><svg class="i"><use href="#ze"/></svg><i class="vs"></i>
          <svg class="i"><use href="#axes"/></svg><svg class="dd"><use href="#dd"/></svg>
          <svg class="i ml" viewBox="0 0 16 16"><path d="M2 15V1M0 3l2-2 2 2" stroke="#3fa34a" fill="none"/><path d="M1 14h14M13 12l2 2-2 2" stroke="#c22" fill="none"/><text class="pl" x="4.500" y="9">xy</text></svg>
          <svg class="i" viewBox="0 0 16 16"><path d="M2 15V1M0 3l2-2 2 2" stroke="#2b5584" fill="none"/><path d="M1 14h14M13 12l2 2-2 2" stroke="#3fa34a" fill="none"/><text class="pl" x="4.500" y="9">yz</text></svg>
          <svg class="i" viewBox="0 0 16 16"><path d="M2 15V1M0 3l2-2 2 2" stroke="#c22" fill="none"/><path d="M1 14h14M13 12l2 2-2 2" stroke="#2b5584" fill="none"/><text class="pl" x="4.500" y="9">zx</text></svg>
          <svg class="i18"><use href="#grid"/></svg><svg class="i18"><use href="#gax"/></svg><svg class="i18"><use href="#gleg"/></svg><i class="vs"></i>
          <svg class="i18"><use href="#spk"/></svg><svg class="i"><use href="#trn"/></svg><i class="vs"></i><svg class="i"><use href="#cam"/></svg><svg class="i"><use href="#prn"/></svg>
        </div>
        <svg class="scene" viewBox="972 203 610 626" width="610" height="626">
          <defs>
            <linearGradient id="bg" x1="0" y1="0" x2="0" y2="1"><stop offset="0" stop-color="#fafbff"/><stop offset=".5" stop-color="#eaf4ff"/><stop offset="1" stop-color="#dbecfe"/></linearGradient>
            <linearGradient id="hot" x1="0" y1="0" x2="0" y2="1"><stop offset="0" stop-color="#fff"/><stop offset=".4" stop-color="#ff0"/><stop offset=".5" stop-color="#ffb700"/><stop offset=".8" stop-color="#f00"/><stop offset="1" stop-color="#700000"/></linearGradient>
            <linearGradient id="band" gradientUnits="userSpaceOnUse" x1="1360" y1="460" x2="1390" y2="438"><stop offset="0" stop-color="#c40c00"/><stop offset=".4" stop-color="#bf0600"/><stop offset="1" stop-color="#e60e00"/></linearGradient>
            <linearGradient id="cap" gradientUnits="userSpaceOnUse" x1="1415" y1="730" x2="1434" y2="758"><stop offset="0" stop-color="#804600"/><stop offset=".45" stop-color="#7a3c00"/><stop offset="1" stop-color="#7a0a00"/></linearGradient>
            <clipPath id="cy"><path d="M1207 243.500L1111 332 1426 731l96.500-88z"/></clipPath>
            <clipPath id="co"><path d="M1111 332L991 422.500 1306 822l120-91z"/></clipPath>
            <filter id="b8" x="-50%" y="-50%" width="200%" height="200%"><feGaussianBlur stdDeviation="9"/></filter>
            <filter id="b14" x="-50%" y="-50%" width="200%" height="200%"><feGaussianBlur stdDeviation="14"/></filter>
          </defs>
          <rect x="972" y="203" width="610" height="626" fill="url(#bg)"/>
          <path d="M1118.500 203L1582 790.500M1228 203l354 447-97 87M1337.500 203L1582 513M972 500l259 329M972 589l188 240M972 679l117.500 150" fill="none" stroke="#8b8f95"/>
          <path d="M1207 243.500q10-7 25-7.500L1546.500 636l-24 7.500z" fill="url(#band)"/>
          <path d="M991 422.500l-1.500 4L1305 828l3-6z" fill="#f01800"/>
          <g clip-path="url(#cy)">
            <path d="M1100 230h430v510h-430z" fill="#ffb93e"/>
            <g filter="url(#b14)">
              <path d="M1150 300l40-15 45 40 25 70 60 80 30 70 50 50 30 90-20 30-60-60-50-110-60-60-25-70-20-60z" fill="#ffd23e"/>
              <path d="M1110 335l60 20 50 60-20 20z" fill="#ffa845"/>
              <path d="M1195 330l20 50-10 30" stroke="#ffae42" stroke-width="20" fill="none"/>
              <path d="M1280 430l60 60 60 60-20 5z" fill="#ffc63c"/>
              <path d="M1255 510l50 20 35 70-5 40z" fill="#ff7044"/>
              <path d="M1340 625l50 10 40 90" stroke="#ffac40" stroke-width="26" fill="none"/>
              <path d="M1140 380l60 60 50 80 30 10z" fill="#ffc83c"/>
              <path d="M1425 610l30 60-10 50" stroke="#ffcf3c" stroke-width="20" fill="none"/>
              <path d="M1295 555l50 75" stroke="#ff5044" stroke-width="34" fill="none"/>
            </g>
            <g filter="url(#b8)">
              <path d="M1207 243L1535 660" stroke="#ff7a40" stroke-width="32" fill="none"/>
              <path d="M1205 235l85 115M1370 455l110 140" stroke="#ff3c40" stroke-width="22" fill="none"/>
              <path d="M1355 570l35 22 35 18 22 50" stroke="#ffdc3c" stroke-width="10" fill="none"/>
              <path d="M1145 302l60 12 25 25 15 50" stroke="#ffda3c" stroke-width="12" fill="none"/>
            </g>
          </g>
          <g clip-path="url(#co)">
            <path d="M980 320h460v510H980z" fill="#d87200"/>
            <g filter="url(#b14)">
              <path d="M1062 375l15 50 40 55 90 40 30 70 50 60 25 100 40 30" stroke="#da8800" stroke-width="36" fill="none"/>
              <path d="M1111 335l-5 100 80 60 30 30" stroke="#d96000" stroke-width="26" fill="none"/>
              <path d="M1325 690l10 80 70-30" stroke="#da6200" stroke-width="34" fill="none"/>
              <path d="M985 420L1300 822" stroke="#dc2800" stroke-width="58" fill="none"/>
              <path d="M1075 535l50-8" stroke="#dc3400" stroke-width="30" fill="none"/>
              <path d="M1245 500l90 130" stroke="#dc3000" stroke-width="34" fill="none"/>
              <path d="M1295 575l40 60" stroke="#dc0800" stroke-width="36" fill="none"/>
            </g>
            <g filter="url(#b8)">
              <path d="M1020 470L1290 808" stroke="#dc0400" stroke-width="22" fill="none"/>
            </g>
          </g>
          <path d="M1306 822L1426 731l96.500-88q12-8 24-7.500C1554 639 1528 672 1506 695 1482 722 1455 746 1426 769 1395 792 1352 815 1328 824 1312 830 1304 829 1306 822z" fill="url(#cap)" stroke="#111"/>
          <path d="M991 422.500L1111 332l96-88.500q10-7 25-7.500M1207 243.500l315.500 399.500M1111 332l315 399M991 422.500L1306 822M991 422.500l-1.500 4" fill="none" stroke="#111" stroke-width="1.200"/>
          <rect x="1491.500" y="288.500" width="15" height="486" fill="url(#hot)" stroke="#222"/>
          <path d="M1492 531h2M1504 531h2" stroke="#222"/>
          <path d="M1483 251l5.500 10h-11zM1483 797l5.500-10h-11z"/>
          <g class="nums"><text x="1493" y="262">300</text><text x="1514" y="535">300.15</text><text x="1493" y="796">300</text></g>
          <g class="cap"><text x="1182.500" y="229" textLength="53">时间=0 s</text><text x="1248" y="229" textLength="77">表面: 温度 (K)</text></g>
          <path d="M1015.500 785L1000 765" stroke="#4a82bc" stroke-width="2"/><path d="M998 762l7 4-5 4z" fill="#4a82bc"/>
          <path d="M1015.500 785l-14 13" stroke="#4fa838" stroke-width="2"/><path d="M997 802l3-8 5 5z" fill="#4fa838"/>
          <path d="M1015.500 785l10-5" stroke="#d8185c" stroke-width="2"/><circle cx="1026" cy="779.500" r="3" fill="#d8185c"/>
          <g class="nums"><text x="990" y="758">z</text><text x="1030" y="778">x</text><text x="989" y="808">y</text></g>
          <use href="#logo" x="1557" y="208" width="19" height="19"/>
        </svg>
      </section>

      <section class="panel materials">
        <div class="phead"><h2>添加材料</h2><svg class="dd"><use href="#dd"/></svg><svg class="pin"><use href="#pin"/></svg><svg class="px"><use href="#x"/></svg></div>
        <div class="mtools"><svg class="plus" viewBox="0 0 11 11"><path d="M5.500 0v11M0 5.500h11" stroke="#b0b0b0" stroke-width="3"/></svg><span>添加到组件</span><svg class="dd"><use href="#dd"/></svg><svg class="plus" viewBox="0 0 11 11"><path d="M5.500 0v11M0 5.500h11" stroke="#b0b0b0" stroke-width="3"/></svg><span>添加到选择</span></div>
        <div class="search"><div class="inp"></div><div class="btn">搜索</div></div>
        <ul class="tree">
          <li><svg class="t"><use href="#tc"/></svg><svg class="i"><use href="#m1"/></svg><span>最近使用的材料</span></li>
          <li><svg class="t"><use href="#tc"/></svg><svg class="i"><use href="#m2"/></svg><span>内置材料</span></li>
          <li><svg class="t"><use href="#tc"/></svg><svg class="i"><use href="#m3"/></svg><span>AC/DC</span></li>
          <li><svg class="t"><use href="#tc"/></svg><svg class="i"><use href="#m4"/></svg><span>生物热</span></li>
          <li><svg class="t"><use href="#tc"/></svg><svg class="i"><use href="#m5"/></svg><span>建筑</span></li>
          <li><svg class="t"><use href="#tc"/></svg><svg class="i"><use href="#m6"/></svg><span>流体和气体</span></li>
          <li><svg class="t"><use href="#tc"/></svg><svg class="i"><use href="#m7"/></svg><span>非线性磁性材料</span></li>
          <li><svg class="t"><use href="#tc"/></svg><svg class="i"><use href="#m8"/></svg><span>热电</span></li>
          <li><svg class="t"><use href="#tc"/></svg><svg class="i"><use href="#m9"/></svg><span>用户定义库</span></li>
        </ul>
      </section>
    </div>

    <section class="panel probe">
      <div class="ptabs"><a>消息</a><a>进度</a><a>日志</a><a class="cur">探针表 1</a><span class="sp"></span><svg class="dd"><use href="#dd"/></svg><svg class="pin"><use href="#pin"/></svg><svg class="px"><use href="#x"/></svg></div>
      <div class="gtools">
        <svg class="i"><use href="#abc"/></svg><i class="vs"></i><div class="num mag">8.85<br>e-12</div><div class="auto"><svg class="i18"><use href="#on"/></svg><b>AUTO</b></div><div class="num">8.5<br>e-1</div><div class="num">850<br>e-3</div><div class="num one">0.85</div><i class="vs"></i>
        <svg class="i"><use href="#broom"/></svg><svg class="i"><use href="#trash"/></svg><svg class="i"><use href="#tg"/></svg><svg class="i"><use href="#sq"/></svg><svg class="i"><use href="#cpy"/></svg><svg class="i"><use href="#ext"/></svg><svg class="i"><use href="#tbl"/></svg><svg class="dd"><use href="#dd"/></svg>
      </div>
      <div class="tblbox">
        <div class="grid">
          <div class="tr th"><span>时间 (s)</span><span>温度 (K), 边界探针 1</span><span>温度 (K), 边界探针 2</span><span>温度 (K), 边界探针 3</span><span>温度 (K), 边界探针 4</span></div>
          <div class="tr"><span>346.50</span><span>331.65</span><span>324.71</span><span>310.08</span><span>304.41</span></div>
          <div class="tr"><span>348.00</span><span>331.65</span><span>324.71</span><span>310.08</span><span>304.41</span></div>
          <div class="tr"><span>349.50</span><span>331.65</span><span>324.71</span><span>310.08</span><span>304.41</span></div>
        </div>
        <div class="scroll"><svg width="9" height="6"><path d="M1 5l3.500-4L8 5" fill="none" stroke="#999"/></svg><i></i><svg width="9" height="6"><path d="M1 1l3.500 4L8 1" fill="none" stroke="#999"/></svg></div>
      </div>
    </section>
  </div>
</main>

<footer class="status">1.13 GB | 1.31 GB</footer>

<div class="taskbar">
  <div class="start"><svg width="16" height="16"><path d="M0 2.300L6.800 1.300v6.200H0zM7.700 1.200L16 0v7.500H7.700zM0 8.400h6.800v6.300L0 13.700zM7.700 8.400H16V16l-8.300-1.200z" fill="#fff"/></svg></div>
  <div class="tsearch"><svg width="18" height="18"><circle cx="11" cy="7" r="5" fill="none" stroke="#222" stroke-width="1.300"/><path d="M7.500 11L2 17" stroke="#222" stroke-width="1.300"/></svg>在这里输入你要搜索的内容</div>
  <div class="tb"><svg width="18" height="18"><circle cx="9" cy="9" r="6.500" fill="none" stroke="#fff" stroke-width="2"/></svg></div>
  <div class="tb"><svg width="18" height="18"><path d="M1.500 1v3.500h10V1M1.500 6.500h10v6h-10zM1.500 17v-2.500h10V17M15.500 1v2M15.500 8v9" fill="none" stroke="#fff" stroke-width="1.200"/><path d="M14 4h3v3h-3z" fill="#fff"/></svg></div>
  <div class="tb run"><svg width="24" height="24"><circle cx="12" cy="12" r="12" fill="#1177c9"/><path d="M1 8C4-2 22-3 24 11c0 5-7 6-9 3 2-5-7-9-14-6z" fill="#3fcf8e"/><path d="M1 9C4 0 14-1 19 2 10 1 4 4 1 9z" fill="#35b9e6"/><path d="M1 9c5-4 12-2 12 3-5 0-5 9 8 8-9 8-23 1-20-11z" fill="#0f5fb0"/><path d="M13 11c-3 2-1 8 9 7l2-4c0 2-7 2-9 0 0-2 0-3-2-3z" fill="#1c2947"/></svg></div>
  <div class="tb"><svg width="24" height="20"><path d="M1 1h8l2 2h12v15H1z" fill="#f0b429"/><path d="M1 5h22v13H1z" fill="#fbd672"/><path d="M5 10h14v9h-4v-4H9v4H5z" fill="#3a96dd"/></svg></div>
  <div class="tb run"><svg width="24" height="24"><path d="M0 1h24v6H0z" fill="#c2303a"/><path d="M0 8h24v7H0z" fill="#4a4aa8"/><path d="M0 16h24v7H0z" fill="#2f8f3a"/><path d="M3 1v22M21 1v22" stroke="#e6c35a" stroke-width="1.500"/><path d="M8 0h8v24H8z" fill="#d9902c"/><path d="M9 9h6v7H9z" fill="#fff" stroke="#7a4a10"/></svg></div>
  <div class="tb act"><svg width="24" height="24"><path d="M2 3l17-2 4 17-11 5-6-3z" fill="#e3e6ea"/><path d="M7 7q5.500-2 10 0 1.500 5 0 9-5 2-10 0-1-4.500 0-9z" fill="url(#gJet)" stroke="#14307e" stroke-width="1.500"/></svg></div>
  <div class="tray">
    <svg class="cloud" width="22" height="16"><path d="M5 15a5 5 0 0 1 0-9 7 7 0 0 1 12-1c6 2 5 10 0 10z" fill="#cfe8fb"/><path d="M12 1a7 7 0 0 1 6 5c4 2 3 8-1 9 3-5-1-11-5-14z" fill="#8cc3ef"/></svg>
    <span class="wx">23°C&nbsp; 多云</span>
    <svg class="chev" width="13" height="8"><path d="M1 7l5.500-5.500L12 7" fill="none" stroke="#fff" stroke-width="1.300"/></svg>
    <svg class="net" width="17" height="14"><path d="M4 2.500h12.500v8H5M1 .5h4v4H1zM2.500 5v7M10 11v2M6 13.500h8" fill="none" stroke="#fff"/></svg>
    <svg class="vol" width="17" height="14"><path d="M1 5h2.500L7 2v10L3.500 9H1z" fill="none" stroke="#fff"/><path d="M9 5q1.500 2 0 4M11.500 3q3 4 0 8M14 1.500q4 5.500 0 11" fill="none" stroke="#fff"/></svg>
    <span class="ime">中</span>
    <span class="clock">8:10<br>2022/5/17</span>
    <div class="notif"><svg width="17" height="17"><path d="M0 0h17v12H9l-3 4v-4H0z" fill="#fff"/><path d="M3 3.500h11M3 6h11M3 8.500h7" stroke="#1c2947"/></svg><b>1</b></div>
    <i class="desk"></i>
  </div>
</div>
</body>
</html>
```
FILE: styles.css
```css
*{box-sizing:border-box}
body{margin:0;width:1920px;height:1080px;overflow:hidden;display:flex;flex-direction:column;background:#fafbff;color:#000;font:12px/16px "Open Sans","Noto Sans CJK SC",sans-serif;word-spacing:.8px}
h2,h3,h4,h6,p,ul{margin:0;padding:0;font-weight:400}
ul{list-style:none}
svg{display:block;flex:none}
.defs{position:absolute}
.i{width:16px;height:16px}
.i18{width:18px;height:18px}
.dd{width:8px;height:8px}
.pin{width:8px;height:12px}
.px{width:10px;height:10px}
.blue{color:#4080bf}.gray{color:#b0b0b0}.mag,.num.mag{color:#b0246e}
.num{width:16px;height:16px;font:bold 7px/8px "DejaVu Sans",sans-serif;color:#3f6ea5;text-align:center;letter-spacing:-.9px;white-space:nowrap}
.num.one{line-height:16px}
.auto{position:relative}
.auto b{position:absolute;left:1px;top:5px;width:16px;font-size:6.500px;line-height:9px;color:#1c4478;text-align:center;letter-spacing:-.3px}
.pi{font-size:11px;font-weight:700;fill:#3f6ea5}
.pl{font-size:9.500px;fill:#2b5584}

.titlebar{height:22px;background:#fff;display:flex;align-items:flex-start;padding:2px 0 0 1px;position:relative}
.vsep{width:1px;height:13px;background:#b5b5b5;margin:2px 0 0 9px}
.quick{display:flex;gap:7.900px;margin-left:7px}
.qd{margin:4px 0 0 6px}
.loading{position:absolute;left:840px;top:0;width:241px;height:1px;background:#dedede}
.loading i{display:block;width:48px;height:1px;background:#0078d7}
.wtitle{position:absolute;left:1024px;top:0;line-height:18px;letter-spacing:.26px}
.winbtns{margin-left:auto;display:flex;gap:33px;padding-right:19px}

.tabs{height:25px;display:flex;align-items:flex-end;padding-left:3px;background:linear-gradient(#fafcff,#f7fafe);color:#2b579a;border-bottom:1px solid #b8c7da}
.tabs a{line-height:27px;height:24px;margin-right:25.900px}
.tabs .file{background:#2b579a;color:#fff;width:56px;padding-left:12px;margin-right:14.500px;display:flex;align-items:center;gap:3px;align-self:flex-start;line-height:24px}
.tabs .cur{border:1px solid #b8c7da;border-bottom:0;border-radius:2px 2px 0 0;background:#fff;width:94px;padding-left:10px;margin:0 0 -1px -10px;height:24px;line-height:25px;white-space:nowrap}
.help{margin:0 7px 6px auto;width:14px;height:14px;background:#4a80bb;color:#fff;font-size:11px;line-height:14px;text-align:center}

.ribbon{height:90px;margin:0 3px;border:1px solid #b8c7da;border-top:0;display:flex;background:linear-gradient(#fff,#fdfdfe 50%,#f6f8fc)}
.grp{height:75px;margin-top:6px;border-right:1px solid #b8c7da;display:flex;flex-direction:column;justify-content:space-between}
.grp h6{font-size:12px;line-height:14px;color:#999;text-align:center;height:9px}
.g1{width:101px}.g2{width:341px}.g3{width:186px}.g4{width:332px}.g5{width:112px}
.bigs,.row{display:flex}
.big{display:flex;flex-direction:column;align-items:center;white-space:nowrap;padding-top:3px}
.big span{line-height:16px;margin-top:4px}
.big .dd{margin-top:1px;width:6px}
.g1 .big:first-child{width:57px}
.g1 .big+.big{width:33px}
.cmds{display:grid;grid-auto-rows:22px;margin-top:-4px}
.cmds p{display:flex;align-items:center;gap:2px;white-space:nowrap}
.c2{grid-template-columns:62px 74px 62px 70px;margin-left:11px}
.more{margin-left:0;width:56px}
.c3{grid-template-columns:85px 90px;margin-left:11px}
.off,.off p{color:#a9a9a9}
.c4{grid-template-columns:85px 97px 130px;margin-left:8px}
.cmds .hot{background:#9fd0fb;box-shadow:inset 0 0 0 1px #3c9bec;height:20px;margin:1px 0;width:87px}
.c4 p{padding-left:4px;gap:1px}
.g5 .big:first-child{width:50px;margin-left:10px}
.g5 .big+.big{width:48px}

.work{height:874px;padding:4px 3px 4px;display:flex}
.panel{border:1px solid #cfd3dc;background:#fafbff}
.phead{display:flex;color:#c3cad8;padding:7px 4px 0 7px;height:34px}
.phead h2{font-size:21px;line-height:20px;color:#2b579a;font-weight:300;margin-right:auto}
.phead .dd{margin:8px 6px 0 0}
.phead .pin{margin-top:6px}
.phead .px{margin:6px 0 0 6px}
.builder{width:419px;margin-right:5px;display:flex;flex-direction:column;padding:0 4px 8px}
.builder .phead{padding:7px 0 0 3px}
.btools{display:flex;height:21px;gap:8px;padding-left:1px}
.btools .dd{margin:5px -1px 0 -1px}
.btools .dd+.i{margin-left:5px}
.tree{background:#fff;border:1px solid #c8cbd0}
.builder .tree{flex:1;padding-top:2px}
.tree li{height:19px;display:flex;align-items:center;padding-left:6px;white-space:nowrap}
.tree .t{width:8px;height:8px;margin-right:6px}
.tree span{padding-left:4px;line-height:18px;height:19px;padding-right:2px}
.tree li span{margin-left:-1px}
.tree .l1{padding-left:25px}.tree .l2{padding-left:44px}.tree .l3{padding-left:63px}
.tree .picked .i,.tree .picked span{background-color:#d9d9d9}
.tree .picked .i{box-shadow:-1px 0 #d9d9d9,0 1px #d9d9d9,0 -1px #d9d9d9}

.settings{width:539px;margin-right:5px}
.settings .phead{padding-left:8px;height:35px}
.settings h3{font-size:14.700px;line-height:18px;color:#2b579a;font-weight:300;padding-left:6px}
.stools{display:flex;height:24px;align-items:center;padding-left:6px}
.stools .i:first-child{height:14px}
.stools span{margin:0 9px 0 3px}
.stools .i+.i{margin-left:7px}
.frm{display:flex;align-items:center;height:28px}
.frm label{width:37px;white-space:nowrap}
.w55 label{width:55px}.w50 label{width:50px}.w62 label{width:62px}
.lab{padding:0 5px;height:42px}
.inp{flex:1;height:21px;border:1px solid #c9ccd2;background:#fff;padding:0 3px;line-height:18px}
.btn{width:21px;height:23px;margin-left:8px;border:1px solid #a9a9a9;border-radius:2px;background:linear-gradient(#f3f3f3,#e2e2e2);display:flex;align-items:center;justify-content:center}
.cmb{flex:1;height:22px;border:1px solid #999;border-radius:2px;background:linear-gradient(#f2f2f2,#e5e5e5);padding:0 4px 0 11px;display:flex;align-items:center;justify-content:space-between}
.pre{white-space:pre;letter-spacing:.15px}
.settings h4{height:27px;background:#dee8f4;font-size:13px;line-height:25px;padding-bottom:1px;display:flex;align-items:center;padding-left:5px}
.settings h4 svg{width:9px;height:8px;margin-right:15px}
.next{margin-top:2px}
.body{padding:7px 5px 0}
.b1{height:71px}.b2{height:178px}.b3{height:149px;padding-top:22px}
.chk{display:flex;align-items:center;gap:6px;height:22px;padding-left:1px;position:relative;top:-.5px}
.chk i{width:13px;height:13px;border:1px solid #555;background:#fff;display:flex}
.chk .on::after{content:"";width:4px;height:8px;border:solid #222;border-width:0 2px 2px 0;transform:rotate(40deg);margin:0 0 0 4px}
.box{border:1px solid #d5dce3;border-radius:3px;margin:16px 1px 0;padding:0 9px 5px 8px}
.b3 .box{margin-top:0}
.leg{width:max-content;background:#fafbff;margin:-13px 0 0 -3px;padding:0 9px 0 8px}
.b3 .chk{padding-left:2px}
.b3 .leg{padding-left:8px}

.right{width:946px;display:flex;flex-direction:column;justify-content:space-between}
.upper{display:flex;height:689px;justify-content:space-between}
.graphics{width:612px}
.ptabs{height:31px;display:flex;align-items:flex-end;padding-left:4px;border-bottom:1px solid #cfd3dc;gap:8px;color:#c3cad8}
.ptabs a{height:25px;line-height:24px;background:#ebebeb;color:#000;padding:0 4px;font-size:13px;white-space:nowrap}
.ptabs .cur{background:#fafbff;color:#2b579a;border:1px solid #cfd3dc;border-bottom:0;margin-bottom:-1px;padding:0 4px;height:26px}
.ptabs .sp{margin-left:auto}
.ptabs .dd{margin-bottom:5px;margin-right:-2px}.ptabs .pin{margin:0 4px 3px 0}.ptabs .px{margin:0 3px 4px -6px}
.gtools{display:flex;align-items:center;height:30px;gap:8px;padding:4px 0 0 5.500px}
.gtools .i18{margin:0 -1px}
.vs{width:1px;height:16px;background:#c9ccd2;margin:0 4px 0 3.300px}
.gtools .dd{margin-left:-1px}
.gtools .ml{margin-left:4px}
.scene{width:610px;height:626px}
.nums{font:12px "DejaVu Sans",sans-serif;letter-spacing:.2px}
.cap{font-size:12.500px}

.materials{width:329px;padding:0 5px 7px 4px;display:flex;flex-direction:column}
.materials .phead{padding:7px 0 0 3px}
.mtools{display:flex;height:23px;color:#909090;padding-left:4px}
.mtools .plus{width:11px;height:11px;margin:3px 6px 0 1px}
.mtools .dd{margin:4px 15px 0 8px}
.search{display:flex;height:24px;align-items:center}
.search .inp{flex:none;width:255px}
.search .btn{width:60px;margin-left:5px;border-color:#888;height:22px}
.materials .tree{flex:1;margin:3px 0 0 1px;padding-top:2px}
.materials .tree li{padding-left:17px}

.probe{height:171px;border-color:#9dd0f7;padding-bottom:7px}
.probe .ptabs{color:#444;height:30px}
.probe .gtools{padding-left:10px}
.probe .ptabs .cur{color:#1e8fee}
.tblbox{margin:3px 8px 0 9px;height:100px;border:1px solid #cfcfcf;background:#fdfdff;display:flex;width:927px}
.grid{flex:1}
.tr{display:grid;grid-template-columns:42px 120px 120px 120px 119px 1fr;height:20px;border-bottom:1px solid #a9a9a9;background:#fff}
.tr span{border-right:1px solid #a9a9a9;padding-left:1px;line-height:19px;white-space:nowrap;letter-spacing:.1px}
.th{height:28px;background:linear-gradient(#fff 40%,#f1f2f4);border-color:#cfcfcf}
.th span{line-height:31px;padding-left:5px;border-color:#dcdcdc;letter-spacing:0;word-spacing:1.700px}
.th span:first-child{padding-left:0;word-spacing:1px}
.scroll{width:17px;margin-top:28px;background:#f0f0f0;display:flex;flex-direction:column;align-items:center;justify-content:space-between;padding:5px 0}
.scroll i{width:17px;height:8px;background:#cdcdcd;margin-top:24px}

.status{height:29px;background:#f0edec;padding-left:1208px;line-height:34px}
.taskbar{height:40px;background:#1b2845;display:flex;color:#fff}
.start{width:48px;display:flex;align-items:center;justify-content:center}
.tsearch{width:344px;background:#f1f1f1;border:1px solid #bbb;color:#333;font-size:14px;display:flex;align-items:center;gap:10px;padding-left:11px}
.tb{width:49px;display:flex;align-items:center;justify-content:center;position:relative;left:-1px}
.run::after,.act::after{content:"";position:absolute;left:4px;right:5px;bottom:0;height:2px;background:#76b9ed}
.act{background:#4a566c}
.act::after{left:0;right:0}
.tray{margin-left:auto;display:flex;align-items:center}
.wx{font-size:14.500px;margin:0 16px 0 10px;width:69px;white-space:nowrap}
.net{margin:0 7px 0 9px}
.ime{font-size:14px;margin:0 0 0 8px;width:16px}
.clock{width:66px;text-align:center;line-height:18px;margin:0 1px 0 6px}
.chev{margin-left:-1px}
.notif{margin-left:14px;position:relative}
.notif b{position:absolute;left:7px;top:7px;width:17px;height:17px;border-radius:50%;border:1px solid #888;background:#2a2f3a;font-size:11px;line-height:15px;text-align:center}
.desk{width:1px;height:40px;background:#6a7388;margin:0 4px 0 19px}
```
